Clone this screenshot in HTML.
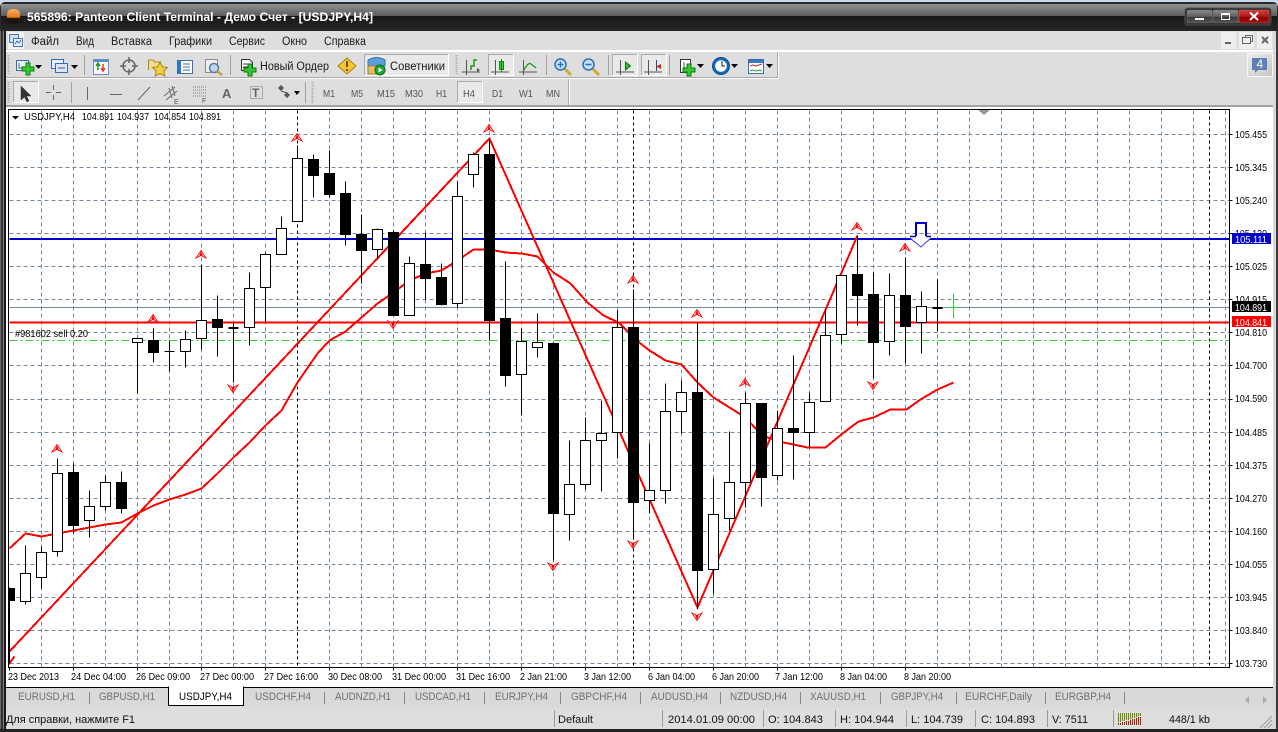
<!DOCTYPE html>
<html><head><meta charset="utf-8"><title>Panteon Client Terminal</title>
<style>
html,body{margin:0;padding:0;background:#c8d9ec;overflow:hidden}
svg{display:block;font-family:"Liberation Sans","DejaVu Sans",sans-serif;font-size:11px}
.ax{font-size:10.5px;fill:#000}
.tb{font-size:11px;fill:#707070}
.st{font-size:11px;fill:#111}
.tf{font-size:10.5px;fill:#555}
.mn{font-size:11.5px;fill:#1a1a1a}
.hd{font-size:10.5px;fill:#000}
</style></head><body>
<svg width="1278" height="732" viewBox="0 0 1278 732" xmlns="http://www.w3.org/2000/svg">
<defs>
<linearGradient id="tg" x1="0" y1="0" x2="0" y2="1"><stop offset="0" stop-color="#939393"/><stop offset="1" stop-color="#5c5c5c"/></linearGradient>
<linearGradient id="tg2" x1="0" y1="0" x2="0" y2="1"><stop offset="0" stop-color="#171717"/><stop offset="1" stop-color="#262626"/></linearGradient>
<linearGradient id="bg1" x1="0" y1="0" x2="0" y2="1"><stop offset="0" stop-color="#8a8a8a"/><stop offset=".5" stop-color="#606060"/><stop offset=".55" stop-color="#3a3a3a"/><stop offset="1" stop-color="#555"/></linearGradient>
<linearGradient id="bg2" x1="0" y1="0" x2="0" y2="1"><stop offset="0" stop-color="#d04040"/><stop offset=".5" stop-color="#b01818"/><stop offset=".55" stop-color="#8c0000"/><stop offset="1" stop-color="#a01010"/></linearGradient>
<linearGradient id="ball" x1="0" y1="0" x2="0" y2="1"><stop offset="0" stop-color="#f6b070"/><stop offset=".55" stop-color="#e87a10"/><stop offset=".62" stop-color="#2a1505"/><stop offset="1" stop-color="#111"/></linearGradient>
<linearGradient id="nt" x1="0" y1="0" x2="1" y2="1"><stop offset="0" stop-color="#eeeeee"/><stop offset="1" stop-color="#c4c4c4"/></linearGradient>
<clipPath id="cc"><rect x="8.5" y="110" width="1220" height="557"/></clipPath>
<g id="up"><path d="M0 .5L5 8 0 5.5-5 8Z" fill="#fff" stroke="#f00" stroke-width=".9"/><path d="M0 1L1.800 6H-1.800Z" fill="#f00"/></g>
<g id="dn"><path d="M0 -.5L5 -8 0 -5.5-5 -8Z" fill="#fff" stroke="#f00" stroke-width=".9"/><path d="M0 -1L1.800 -6H-1.800Z" fill="#f00"/></g>
<g id="pl"><path d="M-2-6H2V-2H6V2H2V6H-2V2H-6V-2H-2Z" fill="#35c935" stroke="#0b7a0b"/></g>
</defs>

<!-- window frame -->
<rect width="1278" height="3" fill="#c8d9ec"/>
<rect x="0" y="2" width="1278" height="730" rx="5" fill="#2a2a2a"/>
<rect x="1" y="4" width="1276" height="12" fill="url(#tg)"/>
<rect x="1" y="16" width="1276" height="15" fill="url(#tg2)"/>
<rect x="0" y="31" width="1278" height="701" fill="#333"/>

<!-- title -->
<rect x="7" y="9" width="13" height="15" rx="5" fill="url(#ball)"/>
<text x="27" y="21" font-size="12" font-weight="bold" fill="#fff" textLength="346" lengthAdjust="spacingAndGlyphs">565896: Panteon Client Terminal - Демо Счет - [USDJPY,H4]</text>

<!-- window buttons -->
<rect x="1185" y="8" width="86" height="17" rx="3" fill="#222" stroke="#555"/>
<rect x="1187" y="10" width="25" height="13" rx="1" fill="url(#bg1)" stroke="#777" stroke-width=".6"/>
<rect x="1213" y="10" width="25" height="13" rx="1" fill="url(#bg1)" stroke="#777" stroke-width=".6"/>
<rect x="1239" y="10" width="30" height="13" rx="1" fill="url(#bg2)" stroke="#c66" stroke-width=".6"/>
<rect x="1195" y="18" width="9" height="2" fill="#fff"/>
<rect x="1221.5" y="13.5" width="8" height="6" fill="none" stroke="#fff"/><rect x="1221" y="13" width="9" height="2" fill="#fff"/>
<path d="M1250 12.5L1258 20M1258 12.5L1250 20" stroke="#fff" stroke-width="2"/>

<!-- client background -->
<rect x="6" y="31" width="1267" height="698" fill="#dedede"/>
<rect x="0" y="31" width="1" height="700" fill="#6a6a6a"/><rect x="3" y="31" width="1" height="700" fill="#808080"/><rect x="4" y="31" width="2" height="700" fill="#1a1a1a"/>
<rect x="1276" y="31" width="2" height="700" fill="#3a3a3a"/><rect x="1273" y="31" width="3" height="700" fill="#d8d8d8"/>

<!-- menu -->
<rect x="8" y="32" width="16" height="17" fill="#f2f2f2"/>
<rect x="9.5" y="34.5" width="9" height="8" fill="#cfe0f5" stroke="#4a78b8"/><rect x="13.5" y="38.5" width="9" height="8" fill="#e6f0fb" stroke="#4a78b8"/><path d="M15 44l2-3 2 2 2-3" fill="none" stroke="#3a6ab0"/>
<text class="mn" x="31" y="45" textLength="28" lengthAdjust="spacingAndGlyphs">Файл</text><text class="mn" x="76" y="45" textLength="18" lengthAdjust="spacingAndGlyphs">Вид</text><text class="mn" x="111" y="45" textLength="41" lengthAdjust="spacingAndGlyphs">Вставка</text><text class="mn" x="169" y="45" textLength="43" lengthAdjust="spacingAndGlyphs">Графики</text><text class="mn" x="229" y="45" textLength="36" lengthAdjust="spacingAndGlyphs">Сервис</text><text class="mn" x="282" y="45" textLength="25" lengthAdjust="spacingAndGlyphs">Окно</text><text class="mn" x="324" y="45" textLength="42" lengthAdjust="spacingAndGlyphs">Справка</text>
<rect x="1221" y="32" width="15" height="17" fill="#efefef"/><rect x="1239" y="32" width="15" height="17" fill="#efefef"/><rect x="1257" y="32" width="15" height="17" fill="#efefef"/>
<rect x="1225" y="42" width="6" height="2" fill="#666"/>
<path d="M1245.5 37.5v-2h7v6h-2M1242.5 37.5h8v6h-8z" fill="none" stroke="#666"/>
<path d="M1262 37l6 6M1268 37l-6 6" stroke="#666" stroke-width="2"/>
<rect x="6" y="50" width="1267" height="2" fill="#fff"/>

<!-- toolbars -->
<rect x="6" y="77" width="773" height="1" fill="#a8a8a8"/><rect x="6" y="78" width="773" height="1" fill="#fff"/>
<rect x="777" y="52" width="1" height="26" fill="#a8a8a8"/><rect x="778" y="52" width="1" height="27" fill="#fff"/>
<rect x="568" y="79" width="1" height="26" fill="#a8a8a8"/><rect x="569" y="79" width="1" height="26" fill="#fff"/>
<rect x="6" y="105" width="1267" height="2" fill="#a2a2a2"/>
<rect x="6" y="107" width="1267" height="2" fill="#fff"/>
<path d="M8.5 55V75M8.5 82V103M312.5 82V103" stroke="#aaa" stroke-width="2" stroke-dasharray="1 1"/>
<path d="M456.5 55V75" stroke="#aaa" stroke-width="2" stroke-dasharray="1 1"/>
<path d="M84.5 55V75M230.5 55V75M546.5 55V75M608.5 55V75M669.5 55V75M71.5 82V103M305.5 82V103" stroke="#a0a0a0"/>

<!-- pressed buttons -->
<g fill="#e9e9e9" stroke="#fff">
<rect x="364.5" y="54.5" width="84" height="21"/><rect x="488.5" y="54.5" width="25" height="21"/><rect x="612.5" y="54.5" width="25" height="21"/><rect x="641.5" y="54.5" width="25" height="21"/><rect x="13.5" y="81.5" width="25" height="21"/><rect x="457.5" y="81.5" width="25" height="21"/>
</g>
<path fill="none" stroke="#ababab" d="M364.5 75V54.5H448M488.5 75V54.5H513M612.5 75V54.5H637M641.5 75V54.5H666M13.5 102V81.5H38M457.5 102V81.5H482"/>

<!-- toolbar1 icons -->
<rect x="16.5" y="60.5" width="12" height="10" fill="#e8f0fb" stroke="#3a6ab0"/><path d="M19 63v5h7" fill="none" stroke="#667"/><use href="#pl" x="28" y="69"/><path d="M35 65h7l-3.500 4z" fill="#000"/>
<rect x="51.500" y="59.500" width="12" height="9" fill="#e8f0fb" stroke="#3a6ab0"/><rect x="55.500" y="63.500" width="12" height="9" fill="#dbe7f7" stroke="#3a6ab0"/><path d="M58 68h7" stroke="#556"/><path d="M71 65h7l-3.500 4z" fill="#000"/>
<rect x="93.500" y="59.500" width="15" height="15" fill="#f5f8fc" stroke="#6a8fc0"/><rect x="94" y="60" width="14" height="2" fill="#5a8ad0"/><path d="M98 70v-6m-2 2l2-3 2 3" stroke="#1a9a1a" fill="none" stroke-width="1.500"/><path d="M103 64v6m-2-2l2 3 2-3" stroke="#e04020" fill="none" stroke-width="1.500"/>
<circle cx="129" cy="66" r="6" fill="none" stroke="#666" stroke-width="1.500"/><path d="M129 57v6M129 69v6M120 66h6M132 66h6" stroke="#666" stroke-width="1.500"/>
<path d="M148.500 70V60h5l1 2h6v4" fill="#f0dc90" stroke="#a08a30"/><path d="M160 62l2.500 5 5 .5-3.700 3.500 1 5-4.800-2.500-4.800 2.500 1-5-3.700-3.500 5-.5z" fill="#f6d040" stroke="#a88a10"/>
<rect x="177.500" y="60.500" width="15" height="13" fill="#fff" stroke="#3a6ab0"/><rect x="178" y="61" width="3" height="12" fill="#2a7ad0"/><path d="M183 64h7M183 67h7M183 70h7" stroke="#4a6a9a"/>
<rect x="205.500" y="59.500" width="12" height="13" fill="#eee" stroke="#8a8a8a"/><circle cx="214" cy="68" r="4.500" fill="#bcd9f2" stroke="#5a7aa0" stroke-width="1.500"/><path d="M217 71l5 4" stroke="#c8a040" stroke-width="2.500"/>
<path d="M241.500 59.500h8l3 3v8h-11z" fill="#fff" stroke="#333"/><path d="M243 64h6M243 67h6" stroke="#333"/><use href="#pl" x="250" y="70"/>
<text x="260" y="70" class="mn" textLength="69" lengthAdjust="spacingAndGlyphs">Новый Ордер</text>
<path d="M347 58l9 8-9 8-9-8z" fill="#f4c830" stroke="#a88010"/><path d="M347 61v6M347 69v2" stroke="#7a4a00" stroke-width="2"/>
<path d="M368 60q9-5 17 0v6h-17z" fill="#5aa0d8" stroke="#3a70a8"/><path d="M368 66h14v8h-14z" fill="#e6c060" stroke="#a08030"/><circle cx="380" cy="70" r="5" fill="#21a832" stroke="#0a6a18"/><path d="M378.500 67.500l4 2.500-4 2.500z" fill="#fff"/>
<text x="390" y="70" class="mn" textLength="55" lengthAdjust="spacingAndGlyphs">Советники</text>

<path d="M466.500 60V75M462 72H480" stroke="#555" fill="none"/><path d="M471 70V66h3V60h3" fill="none" stroke="#1c9a1c" stroke-width="1.500"/><path d="M480 70l-3-2v4z" fill="#555"/>
<path d="M495.500 60V75M491 72H509" stroke="#555" fill="none"/><rect x="499.500" y="61.500" width="4" height="8" fill="#3cc83c" stroke="#128a12"/><path d="M501.500 59v13" stroke="#128a12"/>
<path d="M523.500 60V75M519 72H537" stroke="#555" fill="none"/><path d="M524 70q4-8 7-6t5 4" fill="none" stroke="#1c9a1c" stroke-width="1.300"/>
<circle cx="560.500" cy="64.500" r="5.500" fill="#c4e0fa" stroke="#2a70b0" stroke-width="1.500"/><path d="M557.500 64.500h6M560.500 61.500v6" stroke="#2a70b0" stroke-width="1.500"/><path d="M565 69l6 6" stroke="#d0a840" stroke-width="3"/>
<circle cx="588.500" cy="64.500" r="5.500" fill="#c4e0fa" stroke="#2a70b0" stroke-width="1.500"/><path d="M585.500 64.500h6" stroke="#2a70b0" stroke-width="1.500"/><path d="M593 69l6 6" stroke="#d0a840" stroke-width="3"/>
<path d="M620.500 60V75M616 72H634" stroke="#555" fill="none"/><path d="M625.500 62l5 4-5 4z" fill="#2cc02c" stroke="#0a7a0a"/>
<path d="M648.500 60V75M644 72H662" stroke="#555" fill="none"/><path d="M656.500 60V71" stroke="#1a4a9a"/><path d="M661 64l-5 2.500 5 2.500z" fill="#d03010"/>
<rect x="680.500" y="59.500" width="10" height="13" fill="#fff" stroke="#333"/><path d="M684 62v7h5" stroke="#555" fill="none"/><use href="#pl" x="689" y="70"/><path d="M697 64h7l-3.500 4z" fill="#000"/>
<circle cx="721" cy="66" r="7" fill="#fff" stroke="#1668b8" stroke-width="2.500"/><circle cx="721" cy="66" r="8.500" fill="none" stroke="#0b4a90"/><path d="M722 61v5h3" stroke="#224" fill="none"/><path d="M731 64h7l-3.500 4z" fill="#000"/>
<rect x="748.500" y="59.500" width="15" height="14" fill="#fff" stroke="#3a6ab0"/><rect x="749" y="60" width="14" height="3" fill="#3a78c8"/><path d="M750 66l3-1 3 1 3-1 3-1" stroke="#b03020" fill="none"/><path d="M750 71l3-1 3 1 3-1 3 1" stroke="#2a9a2a" fill="none"/><path d="M766 64h7l-3.500 4z" fill="#000"/>

<!-- notification -->
<rect x="1247.500" y="53.500" width="25" height="23" fill="url(#nt)" stroke="#f6f6f6"/>
<path d="M1252 58h15v12h-9l-3 3v-3h-3z" fill="#5f80b4"/>
<text x="1256.500" y="68" font-size="12" fill="#fff">4</text>

<!-- toolbar2 icons -->
<path d="M21 86v14l3.500-3 2.500 5 2-1-2.500-5h4.500z" fill="#333" stroke="#333" stroke-width=".5"/>
<path d="M53.500 85v5M53.500 95v5M46 92.500h5M56 92.500h5" stroke="#666"/>
<path d="M87.500 87v13" stroke="#666"/><path d="M110 94.500h12" stroke="#666"/><path d="M138 100l12-13" stroke="#666"/>
<path d="M164 96l11-9M166 100l11-9M169 88l3 10M172 86l3 10" stroke="#666" fill="none"/><text x="174" y="104" font-size="7" fill="#555">E</text>
<path d="M193 87h13M193 90h13M193 93h13M193 96h13" stroke="#777" stroke-dasharray="1 1" fill="none"/><text x="202" y="103" font-size="7" fill="#555">F</text>
<text x="222" y="98" font-size="13" font-weight="bold" fill="#666">A</text>
<rect x="250.500" y="86.500" width="12" height="12" fill="none" stroke="#777" stroke-dasharray="1 1"/><text x="252" y="97" font-size="12" font-weight="bold" fill="#666">T</text>
<path d="M278 88l3-3 3 3-3 3zM284 95l3-3 3 3-3 3z" fill="#555"/><path d="M281 91l6 2" stroke="#555"/><path d="M294 91h6l-3 4z" fill="#000"/>

<text class="tf" x="323" y="97" textLength="12" lengthAdjust="spacingAndGlyphs">M1</text><text class="tf" x="351" y="97" textLength="12" lengthAdjust="spacingAndGlyphs">M5</text><text class="tf" x="377" y="97" textLength="18" lengthAdjust="spacingAndGlyphs">M15</text><text class="tf" x="405" y="97" textLength="18" lengthAdjust="spacingAndGlyphs">M30</text><text class="tf" x="436" y="97" textLength="11" lengthAdjust="spacingAndGlyphs">H1</text><text class="tf" x="463" y="97" textLength="12" lengthAdjust="spacingAndGlyphs">H4</text><text class="tf" x="492" y="97" textLength="11" lengthAdjust="spacingAndGlyphs">D1</text><text class="tf" x="519" y="97" textLength="14" lengthAdjust="spacingAndGlyphs">W1</text><text class="tf" x="546" y="97" textLength="14" lengthAdjust="spacingAndGlyphs">MN</text>

<!-- chart canvas -->
<rect x="6" y="109" width="1267" height="578" fill="#fff"/>
<rect x="8" y="109" width="1222" height="1" fill="#000"/>
<rect x="8" y="109" width="1" height="559" fill="#000"/>
<rect x="1229" y="109" width="1" height="559" fill="#000"/>
<rect x="8" y="667" width="1222" height="1" fill="#000"/>

<g transform="translate(.5 .5)" shape-rendering="crispEdges">
<g clip-path="url(#cc)">
<path stroke="#778899" fill="none" stroke-dasharray="4 3" d="M9 134H1229M9 167H1229M9 200H1229M9 233H1229M9 266H1229M9 299H1229M9 332H1229M9 365H1229M9 399H1229M9 432H1229M9 465H1229M9 498H1229M9 531H1229M9 564H1229M9 597H1229M9 630H1229M9 663H1229"/>
<path stroke="#778899" fill="none" stroke-dasharray="4 3" d="M41 110V667M73 110V667M105 110V667M137 110V667M169 110V667M201 110V667M233 110V667M265 110V667M329 110V667M361 110V667M393 110V667M425 110V667M457 110V667M489 110V667M521 110V667M553 110V667M585 110V667M617 110V667M649 110V667M681 110V667M713 110V667M745 110V667M777 110V667M809 110V667M841 110V667M873 110V667M905 110V667M937 110V667M969 110V667M1001 110V667M1033 110V667M1065 110V667M1097 110V667M1129 110V667M1161 110V667M1193 110V667M1225 110V667"/>
<path stroke="#000" fill="none" stroke-dasharray="3 3" d="M297 110V667M633 110V667M1209 110V667"/>
<path stroke="#778899" d="M9 307H1229"/>
<path stroke="#32cd32" fill="none" stroke-dasharray="8 3 2 3" d="M9 340H1229"/>
<path stroke="#0000cc" stroke-width="2" d="M9 238.500H1229"/>
<path stroke="#f00" stroke-width="2" d="M9 322H1229"/>
<path fill="none" stroke="#f00" stroke-width="2" d="M8 664L14 656M9 651L489 138 697 607 857 235"/>
<path fill="none" stroke="#f00" stroke-width="2" d="M9 548L25 533 41 536 57 533 73 530 89 527 105 524 121 522 137 513 153 505 169 499 185 494 201 488 217 473 233 457 249 442 265 425 281 410 297 382 317 353 329 340 345 331 361 317 377 303 393 292 409 280 425 273 441 270 457 260 473 249 489 249 505 252 521 253 537 256 553 272 570 283 587 302 603 315 618 322 640 343 649 350 665 360 681 364 697 382 713 397 729 407 745 417 757 430 767 437 783 442 793 444 807 447 825 447 842 433 858 421 873 417 890 409 906 409 920 399 937 389 953 382"/>
<!-- wicks -->
<path stroke="#000" fill="none" d="M9 587V663M25 545V604M41 546V588M57 458V556M73 463V533M89 490V537M105 475V510M121 471V513M137 338V393M153 328V362M169 340V371M185 330V367M201 264V349M217 295V356M233 323V382M249 272V345M265 252V322M281 216V254M297 145V221M313 154V197M329 150V197M345 181V245M361 214V283M377 228V259M393 230V315M409 256V315M425 232V299M441 263V305M457 181V307M473 152V187M489 138V340M505 261V386M521 328V415M537 313V357M553 342V560M569 440V540M585 417V489M601 400V491M617 310V458M633 289V538M649 443V513M665 383V503M681 380V433M697 323V608M713 478V593M729 431V530M745 392V507M761 403V506M777 410V480M793 355V479M809 392V447M825 310V401M841 275V343M857 235V325M873 272V378M889 273V355M905 257V363M921 291V353M937 279V331"/>
<!-- white bodies -->
<path stroke="#000" fill="#fff" d="M20 573H30V601H20ZM36 552H46V577H36ZM52 473H62V551H52ZM84 506H94V520H84ZM100 482H110V506H100ZM132 338H142V342H132ZM180 339H190V351H180ZM196 320H206V338H196ZM244 288H254V327H244ZM260 254H270V287H260ZM276 228H286V254H276ZM292 158H302V221H292ZM372 229H382V249H372ZM404 263H414V315H404ZM452 196H462V303H452ZM468 154H478V174H468ZM516 341H526V374H516ZM532 342H542V347H532ZM564 484H574V514H564ZM580 440H590V484H580ZM596 433H606V440H596ZM612 327H622V432H612ZM644 490H654V500H644ZM660 411H670V490H660ZM676 392H686V411H676ZM708 514H718V569H708ZM724 482H734V518H724ZM740 403H750V482H740ZM772 428H782V475H772ZM804 402H814V432H804ZM820 335H830V401H820ZM836 275H846V334H836ZM884 295H894V341H884ZM916 306H926V322H916Z"/>
<!-- black bodies -->
<path stroke="#000" fill="#000" d="M4 588H14V600H4ZM68 472H78V525H68ZM116 482H126V508H116ZM148 340H158V352H148ZM212 319H222V327H212ZM308 159H318V175H308ZM324 173H334V194H324ZM340 193H350V234H340ZM356 234H366V250H356ZM388 232H398V315H388ZM420 264H430V278H420ZM436 277H446V304H436ZM484 154H494V320H484ZM500 318H510V375H500ZM548 343H558V513H548ZM628 327H638V502H628ZM692 392H702V570H692ZM756 403H766V477H756ZM788 428H798V432H788ZM852 274H862V295H852ZM868 294H878V342H868ZM900 295H910V326H900Z"/>
<path stroke="#000" d="M164 351H174M228 327H238M228 328H238M932 307H942M932 308H942"/>
<path stroke="#32cd32" d="M953 293V318M949 307H958"/>
</g>
<!-- ticks -->
<path stroke="#000" d="M1229 134h3M1229 167h3M1229 200h3M1229 233h3M1229 266h3M1229 299h3M1229 332h3M1229 365h3M1229 399h3M1229 432h3M1229 465h3M1229 498h3M1229 531h3M1229 564h3M1229 597h3M1229 630h3M1229 663h3"/>
<path stroke="#000" d="M9 667v3M73 667v3M137 667v3M201 667v3M265 667v3M329 667v3M393 667v3M457 667v3M521 667v3M585 667v3M649 667v3M713 667v3M777 667v3M841 667v3M905 667v3"/>
</g>

<!-- fractals -->
<use href="#up" x="297" y="133"/><use href="#up" x="201" y="250"/><use href="#up" x="153" y="314"/><use href="#up" x="57" y="444"/><use href="#up" x="489" y="124"/><use href="#up" x="633" y="275"/><use href="#up" x="697" y="309"/><use href="#up" x="745" y="378"/><use href="#up" x="857" y="222"/><use href="#up" x="905" y="243"/>
<use href="#dn" x="233" y="393"/><use href="#dn" x="393" y="329"/><use href="#dn" x="553" y="571"/><use href="#dn" x="633" y="549"/><use href="#dn" x="697" y="621"/><use href="#dn" x="873" y="390"/>

<!-- blue arrow -->
<path d="M916 236V223H926V236" fill="none" stroke="#0000cc" stroke-width="2"/>
<path d="M910 236.500H916M926 236.500H931" stroke="#0000cc" stroke-width="1.500"/>
<path d="M910 238L921 247 931 238" fill="#fff" stroke="#3a3ae0"/>
<path d="M978 110h12l-6 5z" fill="#999"/>

<!-- chart header -->
<path d="M12 116h7l-3.500 3.500z" fill="#000"/>
<text class="hd" x="24" y="120" textLength="51" lengthAdjust="spacingAndGlyphs">USDJPY,H4</text><text class="hd" x="82" y="120" textLength="32" lengthAdjust="spacingAndGlyphs">104.891</text><text class="hd" x="117" y="120" textLength="32" lengthAdjust="spacingAndGlyphs">104.937</text><text class="hd" x="154" y="120" textLength="32" lengthAdjust="spacingAndGlyphs">104.854</text><text class="hd" x="189" y="120" textLength="32" lengthAdjust="spacingAndGlyphs">104.891</text><text class="hd" x="15" y="337" textLength="73" lengthAdjust="spacingAndGlyphs">#981602 sell 0.20</text>

<!-- price axis -->
<text class="ax" x="1235" y="138" textLength="32" lengthAdjust="spacingAndGlyphs">105.455</text><text class="ax" x="1235" y="171" textLength="32" lengthAdjust="spacingAndGlyphs">105.345</text><text class="ax" x="1235" y="204" textLength="32" lengthAdjust="spacingAndGlyphs">105.240</text><text class="ax" x="1235" y="237" textLength="32" lengthAdjust="spacingAndGlyphs">105.130</text><text class="ax" x="1235" y="270" textLength="32" lengthAdjust="spacingAndGlyphs">105.025</text><text class="ax" x="1235" y="303" textLength="32" lengthAdjust="spacingAndGlyphs">104.915</text><text class="ax" x="1235" y="336" textLength="32" lengthAdjust="spacingAndGlyphs">104.810</text><text class="ax" x="1235" y="369" textLength="32" lengthAdjust="spacingAndGlyphs">104.700</text><text class="ax" x="1235" y="402" textLength="32" lengthAdjust="spacingAndGlyphs">104.590</text><text class="ax" x="1235" y="436" textLength="32" lengthAdjust="spacingAndGlyphs">104.485</text><text class="ax" x="1235" y="469" textLength="32" lengthAdjust="spacingAndGlyphs">104.375</text><text class="ax" x="1235" y="502" textLength="32" lengthAdjust="spacingAndGlyphs">104.270</text><text class="ax" x="1235" y="535" textLength="32" lengthAdjust="spacingAndGlyphs">104.160</text><text class="ax" x="1235" y="568" textLength="32" lengthAdjust="spacingAndGlyphs">104.055</text><text class="ax" x="1235" y="601" textLength="32" lengthAdjust="spacingAndGlyphs">103.945</text><text class="ax" x="1235" y="634" textLength="32" lengthAdjust="spacingAndGlyphs">103.840</text><text class="ax" x="1235" y="667" textLength="32" lengthAdjust="spacingAndGlyphs">103.730</text>
<rect x="1232" y="233" width="39" height="11" fill="#0000cc"/><text x="1235" y="243" font-size="10.5" fill="#fff" textLength="32" lengthAdjust="spacingAndGlyphs">105.111</text>
<rect x="1232" y="301" width="39" height="11" fill="#000"/><text x="1235" y="311" font-size="10.5" fill="#fff" textLength="32" lengthAdjust="spacingAndGlyphs">104.891</text>
<rect x="1232" y="316" width="39" height="11" fill="#f00"/><text x="1235" y="326" font-size="10.5" fill="#fff" textLength="32" lengthAdjust="spacingAndGlyphs">104.841</text>

<!-- time axis -->
<text class="ax" x="8" y="680" textLength="51" lengthAdjust="spacingAndGlyphs">23 Dec 2013</text><text class="ax" x="71" y="680" textLength="55" lengthAdjust="spacingAndGlyphs">24 Dec 04:00</text><text class="ax" x="136" y="680" textLength="54" lengthAdjust="spacingAndGlyphs">26 Dec 09:00</text><text class="ax" x="200" y="680" textLength="54" lengthAdjust="spacingAndGlyphs">27 Dec 00:00</text><text class="ax" x="264" y="680" textLength="54" lengthAdjust="spacingAndGlyphs">27 Dec 16:00</text><text class="ax" x="328" y="680" textLength="54" lengthAdjust="spacingAndGlyphs">30 Dec 08:00</text><text class="ax" x="392" y="680" textLength="54" lengthAdjust="spacingAndGlyphs">31 Dec 00:00</text><text class="ax" x="456" y="680" textLength="54" lengthAdjust="spacingAndGlyphs">31 Dec 16:00</text><text class="ax" x="520" y="680" textLength="47" lengthAdjust="spacingAndGlyphs">2 Jan 21:00</text><text class="ax" x="584" y="680" textLength="47" lengthAdjust="spacingAndGlyphs">3 Jan 12:00</text><text class="ax" x="648" y="680" textLength="47" lengthAdjust="spacingAndGlyphs">6 Jan 04:00</text><text class="ax" x="712" y="680" textLength="47" lengthAdjust="spacingAndGlyphs">6 Jan 20:00</text><text class="ax" x="775" y="680" textLength="48" lengthAdjust="spacingAndGlyphs">7 Jan 12:00</text><text class="ax" x="840" y="680" textLength="47" lengthAdjust="spacingAndGlyphs">8 Jan 04:00</text><text class="ax" x="904" y="680" textLength="47" lengthAdjust="spacingAndGlyphs">8 Jan 20:00</text>

<!-- tabs -->
<rect x="6" y="687" width="1267" height="20" fill="#d9d9d9"/>
<rect x="6" y="687" width="1267" height="1" fill="#000"/>
<path d="M89.500 692V704M324.500 692V704M404.500 692V704M484.500 692V704M560.500 692V704M640.500 692V704M720.500 692V704M800.500 692V704M880.500 692V704M956.500 692V704M1045.500 692V704M1124.500 692V704" stroke="#888"/>
<path d="M168.500 687.500V705.500H243.500V687.500" fill="#fff" stroke="#000"/><rect x="169" y="686" width="74" height="3" fill="#fff"/>
<path d="M168 687h1M243 687h1" stroke="#000"/>
<text class="tb" x="18" y="700" textLength="57" lengthAdjust="spacingAndGlyphs">EURUSD,H1</text><text class="tb" x="99" y="700" textLength="56" lengthAdjust="spacingAndGlyphs">GBPUSD,H1</text><text x="179" y="700" font-size="11" fill="#000" textLength="53" lengthAdjust="spacingAndGlyphs">USDJPY,H4</text><text class="tb" x="255" y="700" textLength="56" lengthAdjust="spacingAndGlyphs">USDCHF,H4</text><text class="tb" x="335" y="700" textLength="56" lengthAdjust="spacingAndGlyphs">AUDNZD,H1</text><text class="tb" x="415" y="700" textLength="56" lengthAdjust="spacingAndGlyphs">USDCAD,H1</text><text class="tb" x="495" y="700" textLength="53" lengthAdjust="spacingAndGlyphs">EURJPY,H4</text><text class="tb" x="571" y="700" textLength="56" lengthAdjust="spacingAndGlyphs">GBPCHF,H4</text><text class="tb" x="651" y="700" textLength="57" lengthAdjust="spacingAndGlyphs">AUDUSD,H4</text><text class="tb" x="730" y="700" textLength="57" lengthAdjust="spacingAndGlyphs">NZDUSD,H4</text><text class="tb" x="810" y="700" textLength="56" lengthAdjust="spacingAndGlyphs">XAUUSD,H1</text><text class="tb" x="891" y="700" textLength="52" lengthAdjust="spacingAndGlyphs">GBPJPY,H4</text><text class="tb" x="965" y="700" textLength="67" lengthAdjust="spacingAndGlyphs">EURCHF,Daily</text><text class="tb" x="1055" y="700" textLength="56" lengthAdjust="spacingAndGlyphs">EURGBP,H4</text>
<path d="M1249 696l-4 4 4 4zM1263 696l4 4-4 4z" fill="#aaa"/>

<!-- status -->
<rect x="6" y="707" width="1267" height="22" fill="#dedede"/>
<path d="M554.500 710V727M662.500 710V727M763.500 710V727M835.500 710V727M906.500 710V727M975.500 710V727M1047.500 710V727M1113.500 710V727" stroke="#9a9a9a"/>
<text class="st" x="6" y="723" textLength="129" lengthAdjust="spacingAndGlyphs">Для справки, нажмите F1</text><text class="st" x="558" y="723" textLength="35" lengthAdjust="spacingAndGlyphs">Default</text><text class="st" x="668" y="723" textLength="87" lengthAdjust="spacingAndGlyphs">2014.01.09 00:00</text><text class="st" x="768" y="723" textLength="55" lengthAdjust="spacingAndGlyphs">O: 104.843</text><text class="st" x="840" y="723" textLength="54" lengthAdjust="spacingAndGlyphs">H: 104.944</text><text class="st" x="911" y="723" textLength="52" lengthAdjust="spacingAndGlyphs">L: 104.739</text><text class="st" x="981" y="723" textLength="54" lengthAdjust="spacingAndGlyphs">C: 104.893</text><text class="st" x="1052" y="723" textLength="36" lengthAdjust="spacingAndGlyphs">V: 7511</text><text class="st" x="1169" y="723" textLength="41" lengthAdjust="spacingAndGlyphs">448/1 kb</text>
<g transform="translate(.5 0)" shape-rendering="crispEdges">
<path d="M1118 713v9M1120 713v9M1122 713v8M1124 713v8M1126 713v7M1128 713v7M1130 713v6M1132 713v5M1134 713v5M1136 713v4M1138 713v3M1140 713v3" stroke="#6f8a00"/>
<path d="M1118 723v2M1120 723v2M1122 722v3M1124 722v3M1126 721v4M1128 721v4M1130 720v5M1132 719v6M1134 719v6M1136 718v7M1138 717v8M1140 717v8" stroke="#a82000"/>
</g>
<path d="M1264 728l8-8M1268 728l4-4M1260 728l12-12" stroke="#999" fill="none"/>
<rect x="0" y="729" width="1278" height="3" fill="#222"/>
</svg>
</body></html>
